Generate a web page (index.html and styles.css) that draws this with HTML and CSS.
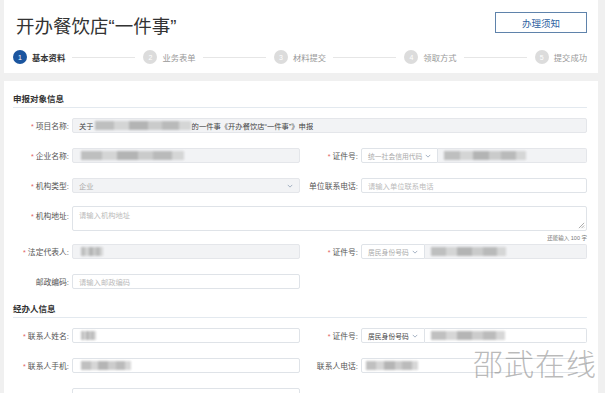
FILE: index.html
```html
<!DOCTYPE html>
<html lang="zh">
<head>
<meta charset="utf-8">
<title>开办餐饮店“一件事”</title>
<link rel="stylesheet" href="styles.css">
</head>
<body>
<div class="page">
  <header class="head-card">
    <div class="head-top">
      <h1 class="title">开办餐饮店“一件事”</h1>
      <button class="notice-btn">办理须知</button>
    </div>
    <div class="steps">
      <div class="step active"><span class="num">1</span><span class="step-label">基本资料</span></div>
      <div class="step-line"></div>
      <div class="step"><span class="num">2</span><span class="step-label">业务表单</span></div>
      <div class="step-line"></div>
      <div class="step"><span class="num">3</span><span class="step-label">材料提交</span></div>
      <div class="step-line"></div>
      <div class="step"><span class="num">4</span><span class="step-label">领取方式</span></div>
      <div class="step-line"></div>
      <div class="step"><span class="num">5</span><span class="step-label">提交成功</span></div>
    </div>
  </header>

  <main class="form-card">
    <h2 class="sec-title">申报对象信息</h2>

    <div class="row first">
      <label class="lbl"><i class="req">*</i>项目名称:</label>
      <div class="inp dis wide val">关于<span class="blur b96"></span>的一件事《开办餐饮店“一件事”》申报</div>
    </div>

    <div class="row">
      <label class="lbl"><i class="req">*</i>企业名称:</label>
      <div class="inp dis"><span class="blur b103"></span></div>
      <label class="lbl"><i class="req">*</i>证件号:</label>
      <div class="combo">
        <div class="sel s77">统一社会信用代码<svg class="chev" viewBox="0 0 8 5"><path d="M1 1l3 3 3-3"/></svg></div>
        <div class="inp dis grow"><span class="blur b82"></span></div>
      </div>
    </div>

    <div class="row">
      <label class="lbl"><i class="req">*</i>机构类型:</label>
      <div class="inp dis selbox">企业<svg class="chev" viewBox="0 0 8 5"><path d="M1 1l3 3 3-3"/></svg></div>
      <label class="lbl">单位联系电话:</label>
      <div class="inp">请输入单位联系电话</div>
    </div>

    <div class="row area-row">
      <label class="lbl"><i class="req">*</i>机构地址:</label>
      <div class="area wide">请输入机构地址<svg class="grip" viewBox="0 0 8 8"><path d="M7 1L1 7M7 4L4 7M7 6.5L6.5 7"/></svg></div>
    </div>
    <div class="counter">还能输入 100 字</div>

    <div class="row after-counter">
      <label class="lbl"><i class="req">*</i>法定代表人:</label>
      <div class="inp dis"><span class="blur b22"></span></div>
      <label class="lbl"><i class="req">*</i>证件号:</label>
      <div class="combo">
        <div class="sel s64">居民身份号码<svg class="chev" viewBox="0 0 8 5"><path d="M1 1l3 3 3-3"/></svg></div>
        <div class="inp dis grow"><span class="blur b75"></span></div>
      </div>
    </div>

    <div class="row">
      <label class="lbl">邮政编码:</label>
      <div class="inp">请输入邮政编码</div>
    </div>

    <h2 class="sec-title second">经办人信息</h2>

    <div class="row first">
      <label class="lbl"><i class="req">*</i>联系人姓名:</label>
      <div class="inp"><span class="blur b15"></span></div>
      <label class="lbl"><i class="req">*</i>证件号:</label>
      <div class="combo">
        <div class="sel s64 filled">居民身份号码<svg class="chev" viewBox="0 0 8 5"><path d="M1 1l3 3 3-3"/></svg></div>
        <div class="inp grow"><span class="blur b74"></span></div>
      </div>
    </div>

    <div class="row">
      <label class="lbl"><i class="req">*</i>联系人手机:</label>
      <div class="inp"><span class="blur b50"></span></div>
      <label class="lbl">联系人电话:</label>
      <div class="inp"><span class="blur b52"></span></div>
    </div>

    <div class="row">
      <label class="lbl"></label>
      <div class="inp"></div>
    </div>

    <div class="watermark">邵武在线</div>
  </main>
</div>
</body>
</html>
```

FILE: styles.css
```css
* { box-sizing: border-box; }
html, body { margin: 0; padding: 0; }
body {
  background: #f0f0f0;
  font-family: "Liberation Sans", "Noto Sans CJK SC", sans-serif;
  color: #333;
  width: 605px;
  height: 393px;
  overflow: hidden;
}
.page { padding: 0 7px 0 4px; }

.head-card {
  background: #fff;
  height: 73px;
  padding: 12px 11px 0 9px;
}
.head-top {
  display: flex;
  justify-content: space-between;
  align-items: flex-start;
}
.title {
  margin: 4px 0 0 3px;
  font-size: 18.5px;
  line-height: 22px;
  font-weight: normal;
  color: #333;
  letter-spacing: 0;
}
.notice-btn {
  width: 92px;
  height: 21px;
  border: 1px solid #5f83ab;
  background: #fff;
  color: #2d5f9f;
  font-family: inherit;
  font-size: 9.5px;
  padding: 0;
  border-radius: 0;
}
.steps {
  display: flex;
  align-items: center;
  margin-top: 12px;
  padding-left: 0;
  height: 14px;
}
.step { display: flex; align-items: center; }
.num {
  width: 14px;
  height: 14px;
  border-radius: 50%;
  background: #dcdcdc;
  color: #fff;
  font-size: 7px;
  display: flex;
  align-items: center;
  justify-content: center;
}
.step-label {
  margin-left: 5px;
  font-size: 8.3px;
  color: #999;
}
.step.active .num { background: #1b559f; }
.step.active .step-label { color: #333; font-weight: bold; }
.step-line {
  flex: 1;
  height: 1px;
  background: #e6e6e6;
  margin: 0 8px 0 7px;
}

.form-card {
  position: relative;
  background: #fff;
  margin-top: 8px;
  height: 330px;
  padding: 12px 11px 0 9px;
}
.sec-title {
  margin: 0;
  font-size: 8.5px;
  line-height: 12px;
  font-weight: bold;
  color: #333;
  padding-bottom: 2px;
  border-bottom: 1px solid #e3e9ef;
}
.sec-title.second { margin-top: 14px; }

.row {
  display: grid;
  grid-template-columns: 56px 228px 55px 226px;
  column-gap: 3px;
  align-items: center;
  margin-top: 15px;
}
.row.first { margin-top: 10px; }
.row.area-row { margin-top: 13px; align-items: start; }
.row.after-counter { margin-top: 2px; }

.lbl {
  text-align: right;
  font-size: 7.8px;
  color: #555;
  white-space: nowrap;
}
.area-row .lbl { padding-top: 4px; }
.req {
  font-style: normal;
  color: #e25c5c;
  margin-right: 2px;
  font-size: 7px;
}

.inp {
  height: 15px;
  border: 1px solid #dfe3e8;
  border-radius: 2px;
  background: #fff;
  padding: 0 6px;
  font-size: 7.3px;
  color: #bbb;
  display: flex;
  align-items: center;
  white-space: nowrap;
  overflow: hidden;
}
.inp.dis { background: #f2f3f5; border-color: #e4e6ea; }
.inp.val { color: #444; }
.wide { grid-column: 2 / 5; }
.selbox { justify-content: space-between; color: #aaa; }

.combo { display: flex; }
.sel {
  height: 15px;
  border: 1px solid #dfe3e8;
  border-radius: 2px 0 0 2px;
  background: #fff;
  padding: 0 6px;
  font-size: 6.8px;
  color: #aaa;
  display: flex;
  align-items: center;
  justify-content: space-between;
  white-space: nowrap;
}
.sel.filled { color: #444; }
.s77 { width: 77px; }
.s64 { width: 64px; }
.grow { flex: 1; border-left: none; border-radius: 0 2px 2px 0; }
.chev {
  width: 6px;
  height: 4px;
  fill: none;
  stroke: #8a9bb0;
  stroke-width: 1;
  flex: none;
}

.area {
  position: relative;
  height: 25px;
  border: 1px solid #dfe3e8;
  border-radius: 2px;
  padding: 3px 6px;
  font-size: 7.3px;
  color: #bbb;
}
.grip {
  position: absolute;
  right: 1px;
  bottom: 1px;
  width: 7px;
  height: 7px;
  fill: none;
  stroke: #888;
  stroke-width: 0.8;
}
.counter {
  text-align: right;
  font-size: 5.5px;
  line-height: 8px;
  color: #777;
  margin-top: 3px;
}

.blur {
  display: inline-block;
  height: 9px;
  background:
    linear-gradient(90deg, #b5b5b5 0 20%, #cfcfcf 20% 35%, #a9a9a9 35% 55%, #c4c4c4 55% 70%, #b0b0b0 70% 88%, #d0d0d0 88%);
  filter: blur(0.9px);
  opacity: 0.85;
}
.b96 { width: 96px; margin: 0 1px; }
.b103 { width: 103px; margin-left: 2px; }
.b82 { width: 82px; margin-left: 0; }
.b22 { width: 22px; margin-left: 2px; }
.b75 { width: 75px; }
.b15 { width: 15px; margin-left: 2px; }
.b74 { width: 74px; }
.b50 { width: 50px; margin-left: 2px; }
.b52 { width: 52px; margin-left: -2px; }

.watermark {
  position: absolute;
  left: 469px;
  top: 263px;
  font-family: "Noto Sans CJK SC", sans-serif;
  font-weight: 300;
  font-size: 30px;
  letter-spacing: 1px;
  color: rgba(140, 140, 140, 0.6);
  line-height: 36px;
}
```
